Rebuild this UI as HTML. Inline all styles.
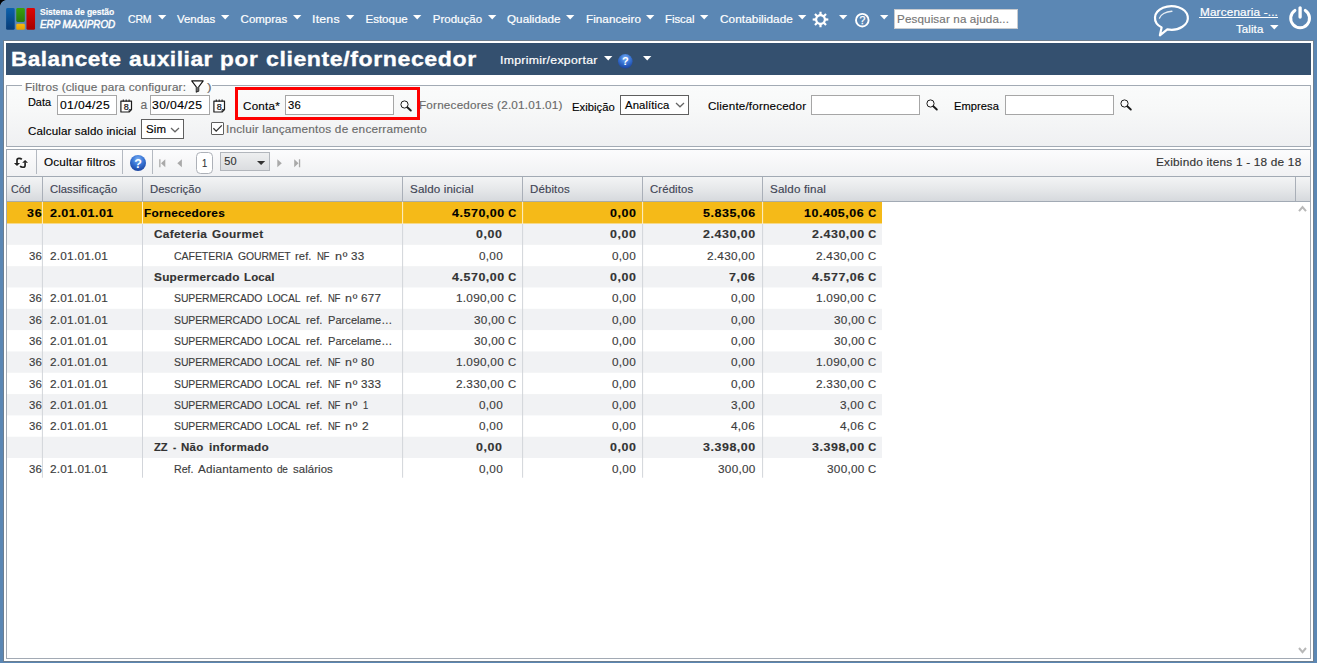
<!DOCTYPE html>
<html lang="pt-BR"><head><meta charset="utf-8"><title>Balancete auxiliar por cliente/fornecedor</title>
<style>
html,body{margin:0;padding:0;background:#5b87b4}
body{width:1317px;height:663px;overflow:hidden;position:relative;font-family:"Liberation Sans",sans-serif}
#bg{position:absolute;left:0;top:0;width:1317px;height:663px;background:#5b87b4}
#cr{position:absolute;left:0;top:0;width:7px;height:7px;background:radial-gradient(circle at 7px 7px,rgba(0,0,0,0) 6.6px,#000 7.4px)}
.t{position:absolute;white-space:nowrap;color:#000;transform-origin:0 0;-webkit-text-stroke-width:.14px}
.a{position:absolute;display:block;overflow:visible}
.b{position:absolute;box-sizing:border-box}
</style></head><body>
<div id="bg"></div><div id="cr"></div>
<nav>
<svg class="a" style="left:5px;top:7px" width="32" height="24" viewBox="0 0 32 24"><defs><linearGradient id="lb" x1="0" y1="0" x2="0" y2="1"><stop offset="0" stop-color="#0b61ad"/><stop offset="1" stop-color="#073b76"/></linearGradient><linearGradient id="lg" x1="0" y1="0" x2="0" y2="1"><stop offset="0" stop-color="#38a00c"/><stop offset="1" stop-color="#2a7a0c"/></linearGradient><linearGradient id="ly" x1="0" y1="0" x2="0" y2="1"><stop offset="0" stop-color="#f7b80c"/><stop offset="1" stop-color="#e69e04"/></linearGradient><linearGradient id="lr" x1="0" y1="0" x2="0" y2="1"><stop offset="0" stop-color="#de0505"/><stop offset="1" stop-color="#a50000"/></linearGradient></defs><rect x="1.1" y="1.1" width="8.6" height="21.7" rx="1.4" fill="url(#lb)"/><rect x="11.25" y="1.1" width="8.6" height="13.8" rx="1.4" fill="url(#lg)"/><rect x="11.25" y="16.7" width="8.6" height="6.1" rx="1.4" fill="url(#ly)"/><rect x="21.45" y="1.1" width="8.6" height="21.7" rx="1.4" fill="url(#lr)"/></svg>
<svg class="a" style="left:812.1px;top:11.4px" width="17" height="17" viewBox="0 0 17 17"><path d="M7.35 3.12 L7.44 0.67 L9.56 0.67 L9.65 3.12 L11.49 3.89 L13.28 2.21 L14.79 3.72 L13.11 5.51 L13.88 7.35 L16.33 7.44 L16.33 9.56 L13.88 9.65 L13.11 11.49 L14.79 13.28 L13.28 14.79 L11.49 13.11 L9.65 13.88 L9.56 16.33 L7.44 16.33 L7.35 13.88 L5.51 13.11 L3.72 14.79 L2.21 13.28 L3.89 11.49 L3.12 9.65 L0.67 9.56 L0.67 7.44 L3.12 7.35 L3.89 5.51 L2.21 3.72 L3.72 2.21 L5.51 3.89Z M8.5 5.2a3.3 3.3 0 1 0 0.001 0Z" fill="#fff" fill-rule="evenodd"/></svg>
<svg class="a" style="left:853.8px;top:11.9px" width="17" height="17" viewBox="0 0 17 17"><circle cx="8.3" cy="8.2" r="6.3" fill="none" stroke="#fff" stroke-width="1.9"/><text x="8.3" y="12" font-family="Liberation Sans, sans-serif" font-size="10.5" text-anchor="middle" fill="#fff" stroke="#fff" stroke-width=".25">?</text></svg>
<div class="b" style="left:894px;top:9px;width:124px;height:20px;background:#fff;border:1px solid #c9ccd0"></div>
<svg class="a" style="left:1150px;top:2px" width="44" height="36" viewBox="0 0 44 36"><path d="M17.3 27.36L9.9 33.3L11.6 25.4A16.45 11.8 0 1 1 17.3 27.36Z" fill="none" stroke="#fff" stroke-width="2.2" stroke-linejoin="round"/><path d="M9.5 16.1C10.5 12.6 15.5 9.6 21.9 9.2" fill="none" stroke="#fff" stroke-width="1.4" stroke-linecap="round" opacity=".85"/></svg>
<div class="b" style="left:1199px;top:17px;width:79px;height:1px;background:#fff"></div>
<svg class="a" style="left:1287px;top:4px" width="26" height="28" viewBox="0 0 26 28"><path d="M18.3 6.4A9.4 9.4 0 1 1 7.9 6.4" fill="none" stroke="#fff" stroke-width="3" stroke-linecap="round"/><path d="M13.1 3.8V13" stroke="#fff" stroke-width="3.3" stroke-linecap="round"/></svg>
<svg class="a" style="left:158.00px;top:14.90px" width="8.4" height="4.5" viewBox="0 0 8.4 4.5"><path d="M0 0H8.4L4.2 4.5Z" fill="#fff"/></svg>
<svg class="a" style="left:221.00px;top:14.90px" width="8.4" height="4.5" viewBox="0 0 8.4 4.5"><path d="M0 0H8.4L4.2 4.5Z" fill="#fff"/></svg>
<svg class="a" style="left:293.00px;top:14.90px" width="8.4" height="4.5" viewBox="0 0 8.4 4.5"><path d="M0 0H8.4L4.2 4.5Z" fill="#fff"/></svg>
<svg class="a" style="left:346.30px;top:14.90px" width="8.4" height="4.5" viewBox="0 0 8.4 4.5"><path d="M0 0H8.4L4.2 4.5Z" fill="#fff"/></svg>
<svg class="a" style="left:413.00px;top:14.90px" width="8.4" height="4.5" viewBox="0 0 8.4 4.5"><path d="M0 0H8.4L4.2 4.5Z" fill="#fff"/></svg>
<svg class="a" style="left:488.00px;top:14.90px" width="8.4" height="4.5" viewBox="0 0 8.4 4.5"><path d="M0 0H8.4L4.2 4.5Z" fill="#fff"/></svg>
<svg class="a" style="left:566.00px;top:14.90px" width="8.4" height="4.5" viewBox="0 0 8.4 4.5"><path d="M0 0H8.4L4.2 4.5Z" fill="#fff"/></svg>
<svg class="a" style="left:645.80px;top:14.90px" width="8.4" height="4.5" viewBox="0 0 8.4 4.5"><path d="M0 0H8.4L4.2 4.5Z" fill="#fff"/></svg>
<svg class="a" style="left:700.00px;top:14.90px" width="8.4" height="4.5" viewBox="0 0 8.4 4.5"><path d="M0 0H8.4L4.2 4.5Z" fill="#fff"/></svg>
<svg class="a" style="left:798.00px;top:14.90px" width="8.4" height="4.5" viewBox="0 0 8.4 4.5"><path d="M0 0H8.4L4.2 4.5Z" fill="#fff"/></svg>
<svg class="a" style="left:838.80px;top:14.90px" width="8.4" height="4.5" viewBox="0 0 8.4 4.5"><path d="M0 0H8.4L4.2 4.5Z" fill="#fff"/></svg>
<svg class="a" style="left:879.80px;top:14.90px" width="8.4" height="4.5" viewBox="0 0 8.4 4.5"><path d="M0 0H8.4L4.2 4.5Z" fill="#fff"/></svg>
<svg class="a" style="left:1269.60px;top:24.90px" width="8.6" height="4.4" viewBox="0 0 8.6 4.4"><path d="M0 0H8.6L4.3 4.4Z" fill="#fff"/></svg>
<span class="t" style="left:39.90px;top:7px;font-size:9px;line-height:10px;letter-spacing:-0.048px;transform:scaleX(0.9483);font-weight:700;color:#fff;">Sistema de gestão</span>
<span class="t" style="left:39.60px;top:19px;font-size:10.4px;line-height:11px;letter-spacing:-0.058px;transform:scaleX(0.9568);font-style:italic;color:#fff;-webkit-text-stroke:.45px #fff;">ERP MAXIPROD</span>
<span class="t" style="left:128.40px;top:13px;font-size:11.5px;line-height:12px;letter-spacing:-0.214px;transform:scaleX(0.9134);color:#fff;-webkit-text-stroke:.2px #fff;">CRM</span>
<span class="t" style="left:176.80px;top:13px;font-size:11.5px;line-height:12px;letter-spacing:-0.007px;transform:scaleX(0.9952);color:#fff;-webkit-text-stroke:.2px #fff;">Vendas</span>
<span class="t" style="left:240.60px;top:13px;font-size:11.5px;line-height:12px;color:#fff;-webkit-text-stroke:.2px #fff;">Compras</span>
<span class="t" style="left:311.93px;top:13px;font-size:11.5px;line-height:12px;letter-spacing:0.214px;transform:scaleX(1.0704);color:#fff;-webkit-text-stroke:.2px #fff;">Itens</span>
<span class="t" style="left:365.50px;top:13px;font-size:11.5px;line-height:12px;color:#fff;-webkit-text-stroke:.2px #fff;">Estoque</span>
<span class="t" style="left:432.80px;top:13px;font-size:11.5px;line-height:12px;letter-spacing:0.008px;color:#fff;-webkit-text-stroke:.2px #fff;">Produção</span>
<span class="t" style="left:507.00px;top:13px;font-size:11.5px;line-height:12px;letter-spacing:0.046px;transform:scaleX(1.0133);color:#fff;-webkit-text-stroke:.2px #fff;">Qualidade</span>
<span class="t" style="left:585.50px;top:13px;font-size:11.5px;line-height:12px;letter-spacing:0.046px;transform:scaleX(1.0147);color:#fff;-webkit-text-stroke:.2px #fff;">Financeiro</span>
<span class="t" style="left:665.40px;top:13px;font-size:11.5px;line-height:12px;letter-spacing:-0.018px;transform:scaleX(0.9834);color:#fff;-webkit-text-stroke:.2px #fff;">Fiscal</span>
<span class="t" style="left:719.70px;top:13px;font-size:11.5px;line-height:12px;letter-spacing:0.073px;transform:scaleX(1.0238);color:#fff;-webkit-text-stroke:.2px #fff;">Contabilidade</span>
<span class="t" style="left:896.60px;top:13px;font-size:11px;line-height:12px;letter-spacing:0.143px;transform:scaleX(1.0542);color:#757575;">Pesquisar na ajuda...</span>
<span class="t" style="left:1199.50px;top:6px;font-size:11px;line-height:12px;letter-spacing:0.163px;transform:scaleX(1.0637);color:#fff;-webkit-text-stroke:.2px #fff;">Marcenaria -...</span>
<span class="t" style="left:1235.80px;top:23px;font-size:11px;line-height:12px;letter-spacing:0.110px;transform:scaleX(1.0401);color:#fff;-webkit-text-stroke:.2px #fff;">Talita</span>
</nav>
<main>
<div class="b" style="left:4px;top:41px;width:1309px;height:620px;background:#fff;box-shadow:0 0 0 1px rgba(120,120,120,.6)"></div>
<header>
<div class="b" style="left:6px;top:43px;width:1305px;height:32px;background:#34506f"></div>
<svg class="a" style="left:616.70px;top:52.70px" width="16.6" height="16.6" viewBox="0 0 16.6 16.6"><defs><radialGradient id="g625" cx="50%" cy="28%" r="75%"><stop offset="0" stop-color="#7fb2f2"/><stop offset="0.45" stop-color="#3b78d8"/><stop offset="1" stop-color="#173f9c"/></radialGradient></defs><circle cx="8.3" cy="8.3" r="7.3" fill="url(#g625)"/><text x="8.3" y="12.26" font-family="Liberation Sans, sans-serif" font-weight="700" font-size="11" text-anchor="middle" fill="#fff">?</text></svg>
<svg class="a" style="left:603.80px;top:55.80px" width="8.4" height="4.4" viewBox="0 0 8.4 4.4"><path d="M0 0H8.4L4.2 4.4Z" fill="#fff"/></svg>
<svg class="a" style="left:642.70px;top:55.80px" width="8.4" height="4.4" viewBox="0 0 8.4 4.4"><path d="M0 0H8.4L4.2 4.4Z" fill="#fff"/></svg>
<span class="t" style="left:10.93px;top:47px;font-size:21px;line-height:23px;letter-spacing:0.439px;transform:scaleX(1.0717);font-weight:700;color:#fff;-webkit-text-stroke:.35px #fff;">Balancete</span>
<span class="t" style="left:129.00px;top:47px;font-size:21px;line-height:23px;letter-spacing:0.456px;transform:scaleX(1.0880);font-weight:700;color:#fff;-webkit-text-stroke:.35px #fff;">auxiliar</span>
<span class="t" style="left:219.83px;top:47px;font-size:21px;line-height:23px;letter-spacing:0.610px;transform:scaleX(1.0745);font-weight:700;color:#fff;-webkit-text-stroke:.35px #fff;">por</span>
<span class="t" style="left:265.50px;top:47px;font-size:21px;line-height:23px;letter-spacing:0.526px;transform:scaleX(1.1005);font-weight:700;color:#fff;-webkit-text-stroke:.35px #fff;">cliente/fornecedor</span>
<span class="t" style="left:500.29px;top:54px;font-size:11px;line-height:12px;letter-spacing:0.278px;transform:scaleX(1.1115);color:#fff;-webkit-text-stroke:.2px #fff;">Imprimir/exportar</span>
</header>
<section id="filtros">
<div class="b" style="left:6px;top:85px;width:1305px;height:62px;border:1px solid #a2aab4;background:linear-gradient(180deg,#fafbfb 0,#f7f8f8 40%,#eff0f2 100%)"></div>
<div class="b" style="left:22px;top:85px;width:190.4px;height:1px;background:#fbfbfb"></div>
<svg class="a" style="left:191.4px;top:79.6px" width="13" height="13" viewBox="0 0 13 13"><path d="M0.7 0.9H12.2L7.7 6.9V11L5.3 12.1V6.9Z" fill="none" stroke="#111" stroke-width="1.1" stroke-linejoin="round"/><path d="M5.5 7H7.5V10.9L5.5 11.8Z" fill="#666"/></svg>
<div class="b" style="left:57px;top:95px;width:59.7px;height:19.5px;background:#fff;border:1px solid #a6a6a6"></div>
<svg class="a" style="left:119.60px;top:98.70px" width="13" height="14" viewBox="0 0 13 14"><path d="M0.9 2.1H11.5V10.6L9.1 13H0.9Z" fill="#fff" stroke="#1c1c1c" stroke-width="1.2" stroke-linejoin="round"/><path d="M11.5 10.6H9.1V13" fill="none" stroke="#222" stroke-width="0.9"/><path d="M3.3 0.5V2.6M6.2 0.5V2.6M9.1 0.5V2.6" stroke="#222" stroke-width="1.1"/><text x="6.2" y="10.7" font-family="Liberation Sans, sans-serif" font-size="9" text-anchor="middle" fill="#111" stroke="#111" stroke-width=".2">8</text></svg>
<div class="b" style="left:150px;top:95px;width:59.7px;height:19.5px;background:#fff;border:1px solid #a6a6a6"></div>
<svg class="a" style="left:212.50px;top:98.70px" width="13" height="14" viewBox="0 0 13 14"><path d="M0.9 2.1H11.5V10.6L9.1 13H0.9Z" fill="#fff" stroke="#1c1c1c" stroke-width="1.2" stroke-linejoin="round"/><path d="M11.5 10.6H9.1V13" fill="none" stroke="#222" stroke-width="0.9"/><path d="M3.3 0.5V2.6M6.2 0.5V2.6M9.1 0.5V2.6" stroke="#222" stroke-width="1.1"/><text x="6.2" y="10.7" font-family="Liberation Sans, sans-serif" font-size="9" text-anchor="middle" fill="#111" stroke="#111" stroke-width=".2">8</text></svg>
<div class="b" style="left:285px;top:95px;width:108.8px;height:19.5px;background:#fff;border:1px solid #a6a6a6"></div>
<svg class="a" style="left:399.50px;top:99.50px" width="13" height="13" viewBox="0 0 13 13"><circle cx="4.5" cy="4.5" r="3.6" fill="#fcfcfc" stroke="#1a1a1a" stroke-width="1"/><path d="M7.3 7.3L10.8 10.5" stroke="#1a1a1a" stroke-width="1.9" stroke-linecap="round"/></svg>
<div class="b" style="left:620.3px;top:95.4px;width:68.8px;height:19.6px;background:#fff;border:1px solid #5f5f5f"></div>
<svg class="a" style="left:674.60px;top:102.40px" width="10" height="5.8" viewBox="-1 -1 10 5.8"><path d="M0 0L4.0 3.8L8 0" fill="none" stroke="#666" stroke-width="1.25"/></svg>
<div class="b" style="left:811px;top:95.4px;width:109.2px;height:19.6px;background:#fff;border:1px solid #a6a6a6"></div>
<svg class="a" style="left:925.60px;top:99.40px" width="13" height="13" viewBox="0 0 13 13"><circle cx="4.5" cy="4.5" r="3.6" fill="#fcfcfc" stroke="#1a1a1a" stroke-width="1"/><path d="M7.3 7.3L10.8 10.5" stroke="#1a1a1a" stroke-width="1.9" stroke-linecap="round"/></svg>
<div class="b" style="left:1005px;top:95.4px;width:109.2px;height:19.6px;background:#fff;border:1px solid #a6a6a6"></div>
<svg class="a" style="left:1119.50px;top:99.40px" width="13" height="13" viewBox="0 0 13 13"><circle cx="4.5" cy="4.5" r="3.6" fill="#fcfcfc" stroke="#1a1a1a" stroke-width="1"/><path d="M7.3 7.3L10.8 10.5" stroke="#1a1a1a" stroke-width="1.9" stroke-linecap="round"/></svg>
<div class="b" style="left:141.2px;top:119.4px;width:42.6px;height:19.6px;background:#fff;border:1px solid #5f5f5f"></div>
<svg class="a" style="left:170.10px;top:126.50px" width="10" height="5.8" viewBox="-1 -1 10 5.8"><path d="M0 0L4.0 3.8L8 0" fill="none" stroke="#666" stroke-width="1.25"/></svg>
<div class="b" style="left:211px;top:122px;width:13px;height:13px;background:#fff;border:1px solid #5f5f5f;border-radius:1px"></div>
<svg class="a" style="left:211px;top:122px" width="13" height="13" viewBox="0 0 13 13"><path d="M2.4 6.3L5.2 9.1L10.8 3.4" fill="none" stroke="#333" stroke-width="1.3"/></svg>
<span class="t" style="left:24.60px;top:81px;font-size:11px;line-height:12px;letter-spacing:0.163px;transform:scaleX(1.0691);color:#6a6a6a;">Filtros (clique para configurar:</span>
<span class="t" style="left:207.20px;top:81px;font-size:11px;line-height:12px;transform:scaleX(1.2333);color:#6a6a6a;">)</span>
<span class="t" style="left:27.60px;top:96px;font-size:11px;line-height:12px;letter-spacing:-0.011px;transform:scaleX(0.9923);">Data</span>
<span class="t" style="left:59.90px;top:99px;font-size:11px;line-height:12px;letter-spacing:0.308px;transform:scaleX(1.1035);">01/04/25</span>
<span class="t" style="left:140.40px;top:98px;font-size:12px;line-height:14px;color:#6a6a6a;">a</span>
<span class="t" style="left:152.40px;top:99px;font-size:11px;line-height:12px;letter-spacing:0.324px;transform:scaleX(1.1096);">30/04/25</span>
<span class="t" style="left:242.60px;top:100px;font-size:11px;line-height:12px;letter-spacing:0.208px;transform:scaleX(1.0595);">Conta*</span>
<span class="t" style="left:287.80px;top:99px;font-size:11px;line-height:12px;letter-spacing:0.131px;transform:scaleX(1.0205);">36</span>
<span class="t" style="left:418.60px;top:99px;font-size:11px;line-height:12px;letter-spacing:0.180px;transform:scaleX(1.0658);color:#6a6a6a;">Fornecedores (2.01.01.01)</span>
<span class="t" style="left:571.80px;top:101px;font-size:11px;line-height:12px;letter-spacing:0.061px;transform:scaleX(1.0194);">Exibição</span>
<span class="t" style="left:625.10px;top:99px;font-size:11px;line-height:12px;letter-spacing:0.086px;transform:scaleX(1.0306);">Analítica</span>
<span class="t" style="left:707.60px;top:100px;font-size:11px;line-height:12px;letter-spacing:0.159px;transform:scaleX(1.0589);">Cliente/fornecedor</span>
<span class="t" style="left:953.70px;top:100px;font-size:11px;line-height:12px;letter-spacing:0.052px;transform:scaleX(1.0131);">Empresa</span>
<span class="t" style="left:27.60px;top:125px;font-size:11px;line-height:12px;letter-spacing:0.123px;transform:scaleX(1.0506);">Calcular saldo inicial</span>
<span class="t" style="left:145.80px;top:123px;font-size:11px;line-height:12px;letter-spacing:0.205px;transform:scaleX(1.0422);">Sim</span>
<span class="t" style="left:226.23px;top:123px;font-size:11px;line-height:12px;letter-spacing:0.190px;transform:scaleX(1.0713);color:#6a6a6a;">Incluir lançamentos de encerramento</span>
<div class="b" style="left:235px;top:87px;width:185px;height:33px;border:3px solid #fe0000"></div>
</section>
<section id="toolbar">
<div class="b" style="left:6px;top:149px;width:1305px;height:28px;border:1px solid #a2aab4;border-bottom:0;background:linear-gradient(180deg,#fcfcfd,#f0f1f3)"></div>
<div class="b" style="left:36px;top:150px;width:1px;height:23.5px;background:#b4b9c1"></div>
<div class="b" style="left:122px;top:150px;width:1px;height:23.5px;background:#b4b9c1"></div>
<div class="b" style="left:152px;top:150px;width:1px;height:23.5px;background:#b4b9c1"></div>
<svg class="a" style="left:13px;top:157px" width="17" height="13" viewBox="0 0 17 13"><g fill="#fff" stroke="#fff" opacity=".9" stroke-linejoin="round"><path d="M8.8 2.3C7.6 1 4 0.7 4 3.2V6.3" fill="none" stroke-width="3.4" stroke-width="1.6"/><path d="M0.9 6.1H7.1L4 9Z" stroke-width="1.6"/><path d="M7.1 9.2C8.3 10.5 12.1 10.9 12.1 8.4V5.6" fill="none" stroke-width="3.4"/><path d="M9.1 5.8H15.1L12.1 2.9Z" stroke-width="1.6"/></g><g fill="#222" stroke="#222"><path d="M8.8 2.3C7.6 1 4 0.7 4 3.2V6.3" fill="none" stroke-width="1.7"/><path d="M0.9 6.1H7.1L4 9Z" stroke="none"/><path d="M7.1 9.2C8.3 10.5 12.1 10.9 12.1 8.4V5.6" fill="none" stroke-width="1.7"/><path d="M9.1 5.8H15.1L12.1 2.9Z" stroke="none"/></g></svg>
<svg class="a" style="left:128.80px;top:154.00px" width="18" height="18" viewBox="0 0 18 18"><defs><radialGradient id="g137" cx="50%" cy="28%" r="75%"><stop offset="0" stop-color="#7fb2f2"/><stop offset="0.45" stop-color="#3b78d8"/><stop offset="1" stop-color="#173f9c"/></radialGradient></defs><circle cx="9" cy="9" r="8" fill="url(#g137)"/><text x="9" y="13.50" font-family="Liberation Sans, sans-serif" font-weight="700" font-size="12.5" text-anchor="middle" fill="#fff">?</text></svg>
<svg class="a" style="left:158.8px;top:158.8px" width="8" height="9" viewBox="0 0 8 9"><path d="M0.2 0.2H1.5V8.2H0.2ZM6.3 0.2V8.2L2 4.2Z" fill="#a9a9a9"/></svg>
<svg class="a" style="left:177.3px;top:158.8px" width="6" height="9" viewBox="0 0 6 9"><path d="M4.9 0.2V8.2L0.3 4.2Z" fill="#a9a9a9"/></svg>
<div class="b" style="left:196.2px;top:152px;width:16.5px;height:21.5px;background:#fff;border:1px solid #adb1b8;border-radius:4.5px"></div>
<div class="b" style="left:220px;top:152px;width:49.6px;height:19px;border:1px solid #b2b6bc;background:linear-gradient(180deg,#eeeff0,#dbdde0)"></div>
<svg class="a" style="left:256.60px;top:161.00px" width="8.2" height="4.1" viewBox="0 0 8.2 4.1"><path d="M0 0H8.2L4.1 4.1Z" fill="#333"/></svg>
<svg class="a" style="left:276.5px;top:158.8px" width="6" height="9" viewBox="0 0 6 9"><path d="M0.3 0.2V8.2L4.8 4.2Z" fill="#a9a9a9"/></svg>
<svg class="a" style="left:293.6px;top:158.8px" width="8" height="9" viewBox="0 0 8 9"><path d="M4.9 0.2H6.2V8.2H4.9ZM0.2 0.2V8.2L4.5 4.2Z" fill="#a9a9a9"/></svg>
<span class="t" style="left:44.00px;top:156px;font-size:11px;line-height:12px;letter-spacing:0.157px;transform:scaleX(1.0668);">Ocultar filtros</span>
<span class="t" style="left:202.20px;top:157px;font-size:11px;line-height:12px;transform:scaleX(0.8500);color:#333;">1</span>
<span class="t" style="left:224.30px;top:155px;font-size:11px;line-height:12px;color:#333;">50</span>
<span class="t" style="left:1156.40px;top:156px;font-size:11px;line-height:12px;letter-spacing:0.187px;transform:scaleX(1.0747);color:#333;">Exibindo itens 1 - 18 de 18</span>
</section>
<section id="grid">
<div class="b" style="left:6px;top:176px;width:1305px;height:26px;border:1px solid #a2aab4;background:linear-gradient(180deg,#f3f4f5 0,#e6e8ea 50%,#d6d9dd 100%)"></div>
<div class="b" style="left:42px;top:177px;width:1px;height:24px;background:#a9afb8"></div>
<div class="b" style="left:142px;top:177px;width:1px;height:24px;background:#a9afb8"></div>
<div class="b" style="left:402px;top:177px;width:1px;height:24px;background:#a9afb8"></div>
<div class="b" style="left:522px;top:177px;width:1px;height:24px;background:#a9afb8"></div>
<div class="b" style="left:642px;top:177px;width:1px;height:24px;background:#a9afb8"></div>
<div class="b" style="left:762px;top:177px;width:1px;height:24px;background:#a9afb8"></div>
<div class="b" style="left:1295px;top:177px;width:1px;height:24px;background:#a9afb8"></div>
<span class="t" style="left:10.60px;top:183px;font-size:11px;line-height:12px;letter-spacing:-0.059px;transform:scaleX(0.9677);color:#3e4454;">Cód</span>
<span class="t" style="left:50.10px;top:183px;font-size:11px;line-height:12px;letter-spacing:0.069px;transform:scaleX(1.0243);color:#3e4454;">Classificação</span>
<span class="t" style="left:149.90px;top:183px;font-size:11px;line-height:12px;letter-spacing:0.086px;transform:scaleX(1.0268);color:#3e4454;">Descrição</span>
<span class="t" style="left:409.70px;top:183px;font-size:11px;line-height:12px;letter-spacing:0.137px;transform:scaleX(1.0552);color:#3e4454;">Saldo inicial</span>
<span class="t" style="left:529.80px;top:183px;font-size:11px;line-height:12px;letter-spacing:0.135px;transform:scaleX(1.0413);color:#3e4454;">Débitos</span>
<span class="t" style="left:649.90px;top:183px;font-size:11px;line-height:12px;letter-spacing:0.104px;transform:scaleX(1.0336);color:#3e4454;">Créditos</span>
<span class="t" style="left:769.80px;top:183px;font-size:11px;line-height:12px;letter-spacing:0.148px;transform:scaleX(1.0571);color:#3e4454;">Saldo final</span>
<div class="b" style="left:6px;top:202px;width:1305px;height:457px;border:1px solid #a2aab4;border-top:0;background:#fff"></div>
<svg class="a" style="left:7px;top:201px" width="876" height="278" viewBox="0 0 876 278"><rect x="0" y="0.90" width="875" height="21.80" fill="#f5ba18"/><rect x="0" y="22.70" width="875" height="21.14" fill="#f1f2f4"/><rect x="0" y="65.16" width="875" height="21.32" fill="#f1f2f4"/><rect x="0" y="107.80" width="875" height="21.32" fill="#f1f2f4"/><rect x="0" y="150.44" width="875" height="21.32" fill="#f1f2f4"/><rect x="0" y="193.08" width="875" height="21.32" fill="#f1f2f4"/><rect x="0" y="235.72" width="875" height="21.32" fill="#f1f2f4"/><rect x="34.90" y="22.70" width="1" height="254.00" fill="#d2d5da"/><rect x="34.90" y="0.90" width="1" height="21.80" fill="#fff" fill-opacity=".78"/><rect x="135.00" y="22.70" width="1" height="254.00" fill="#d2d5da"/><rect x="135.00" y="0.90" width="1" height="21.80" fill="#fff" fill-opacity=".78"/><rect x="395.10" y="22.70" width="1" height="254.00" fill="#d2d5da"/><rect x="395.10" y="0.90" width="1" height="21.80" fill="#fff" fill-opacity=".78"/><rect x="515.10" y="22.70" width="1" height="254.00" fill="#d2d5da"/><rect x="515.10" y="0.90" width="1" height="21.80" fill="#fff" fill-opacity=".78"/><rect x="635.10" y="22.70" width="1" height="254.00" fill="#d2d5da"/><rect x="635.10" y="0.90" width="1" height="21.80" fill="#fff" fill-opacity=".78"/><rect x="755.10" y="22.70" width="1" height="254.00" fill="#d2d5da"/><rect x="755.10" y="0.90" width="1" height="21.80" fill="#fff" fill-opacity=".78"/></svg>
<svg class="a" style="left:1298.00px;top:206.00px" width="9" height="6.2" viewBox="-1 -1 9 6.2"><path d="M0 4.2L3.5 0L7 4.2" fill="none" stroke="#b8b8b8" stroke-width="2"/></svg>
<svg class="a" style="left:1298.00px;top:647.40px" width="9" height="6.2" viewBox="-1 -1 9 6.2"><path d="M0 0L3.5 4.2L7 0" fill="none" stroke="#b8b8b8" stroke-width="2"/></svg>
<div>
<span class="t" style="left:27.30px;top:207px;font-size:11px;line-height:12px;letter-spacing:0.739px;transform:scaleX(1.1278);font-weight:700;">36</span>
<span class="t" style="left:50.10px;top:207px;font-size:11px;line-height:12px;letter-spacing:0.386px;transform:scaleX(1.1419);font-weight:700;">2.01.01.01</span>
<span class="t" style="left:143.60px;top:207px;font-size:11px;line-height:12px;letter-spacing:0.237px;transform:scaleX(1.0713);font-weight:700;">Fornecedores</span>
<span class="t" style="left:508.20px;top:207px;font-size:11px;line-height:12px;font-weight:700;">C</span>
<span class="t" style="left:451.90px;top:207px;font-size:11px;line-height:12px;letter-spacing:0.487px;transform:scaleX(1.1300);font-weight:700;">4.570,00</span>
<span class="t" style="left:609.69px;top:207px;font-size:11px;line-height:12px;letter-spacing:0.487px;transform:scaleX(1.1300);font-weight:700;">0,00</span>
<span class="t" style="left:702.90px;top:207px;font-size:11px;line-height:12px;letter-spacing:0.487px;transform:scaleX(1.1300);font-weight:700;">5.835,06</span>
<span class="t" style="left:868.20px;top:207px;font-size:11px;line-height:12px;font-weight:700;">C</span>
<span class="t" style="left:804.44px;top:207px;font-size:11px;line-height:12px;letter-spacing:0.487px;transform:scaleX(1.1300);font-weight:700;">10.405,06</span>
</div>
<div>
<span class="t" style="left:153.50px;top:228px;font-size:11px;line-height:12px;letter-spacing:0.237px;transform:scaleX(1.0791);font-weight:700;color:#333;">Cafeteria</span>
<span class="t" style="left:211.50px;top:228px;font-size:11px;line-height:12px;letter-spacing:0.289px;transform:scaleX(1.0750);font-weight:700;color:#333;">Gourmet</span>
<span class="t" style="left:476.39px;top:228px;font-size:11px;line-height:12px;letter-spacing:0.487px;transform:scaleX(1.1300);font-weight:700;color:#333;">0,00</span>
<span class="t" style="left:609.69px;top:228px;font-size:11px;line-height:12px;letter-spacing:0.487px;transform:scaleX(1.1300);font-weight:700;color:#333;">0,00</span>
<span class="t" style="left:702.90px;top:228px;font-size:11px;line-height:12px;letter-spacing:0.487px;transform:scaleX(1.1300);font-weight:700;color:#333;">2.430,00</span>
<span class="t" style="left:868.20px;top:228px;font-size:11px;line-height:12px;font-weight:700;color:#333;">C</span>
<span class="t" style="left:811.90px;top:228px;font-size:11px;line-height:12px;letter-spacing:0.487px;transform:scaleX(1.1300);font-weight:700;color:#333;">2.430,00</span>
</div>
<div>
<span class="t" style="left:29.00px;top:250px;font-size:11px;line-height:12px;letter-spacing:0.230px;transform:scaleX(1.0366);color:#3c3c3c;">36</span>
<span class="t" style="left:50.10px;top:250px;font-size:11px;line-height:12px;letter-spacing:0.215px;transform:scaleX(1.0742);color:#3c3c3c;">2.01.01.01</span>
<span class="t" style="left:173.70px;top:250px;font-size:11px;line-height:12px;letter-spacing:-0.061px;transform:scaleX(0.9579);color:#3c3c3c;">CAFETERIA</span>
<span class="t" style="left:237.50px;top:250px;font-size:11px;line-height:12px;letter-spacing:-0.095px;transform:scaleX(0.9458);color:#3c3c3c;">GOURMET</span>
<span class="t" style="left:295.30px;top:250px;font-size:11px;line-height:12px;letter-spacing:0.064px;transform:scaleX(1.0231);color:#3c3c3c;">ref.</span>
<span class="t" style="left:317.20px;top:250px;font-size:11px;line-height:12px;letter-spacing:-0.386px;transform:scaleX(0.8724);color:#3c3c3c;">NF</span>
<span class="t" style="left:334.80px;top:250px;font-size:11px;line-height:12px;letter-spacing:0.697px;transform:scaleX(1.1466);color:#3c3c3c;">nº</span>
<span class="t" style="left:350.90px;top:250px;font-size:11px;line-height:12px;letter-spacing:0.327px;transform:scaleX(1.0527);color:#3c3c3c;">33</span>
<span class="t" style="left:478.50px;top:250px;font-size:11px;line-height:12px;letter-spacing:0.255px;transform:scaleX(1.0700);color:#3c3c3c;">0,00</span>
<span class="t" style="left:611.80px;top:250px;font-size:11px;line-height:12px;letter-spacing:0.255px;transform:scaleX(1.0700);color:#3c3c3c;">0,00</span>
<span class="t" style="left:707.40px;top:250px;font-size:11px;line-height:12px;letter-spacing:0.255px;transform:scaleX(1.0700);color:#3c3c3c;">2.430,00</span>
<span class="t" style="left:867.96px;top:250px;font-size:11px;line-height:12px;transform:scaleX(1.0300);color:#3c3c3c;">C</span>
<span class="t" style="left:816.40px;top:250px;font-size:11px;line-height:12px;letter-spacing:0.255px;transform:scaleX(1.0700);color:#3c3c3c;">2.430,00</span>
</div>
<div>
<span class="t" style="left:153.50px;top:271px;font-size:11px;line-height:12px;letter-spacing:0.252px;transform:scaleX(1.0714);font-weight:700;color:#333;">Supermercado</span>
<span class="t" style="left:243.90px;top:271px;font-size:11px;line-height:12px;letter-spacing:0.145px;transform:scaleX(1.0391);font-weight:700;color:#333;">Local</span>
<span class="t" style="left:508.20px;top:271px;font-size:11px;line-height:12px;font-weight:700;color:#333;">C</span>
<span class="t" style="left:451.90px;top:271px;font-size:11px;line-height:12px;letter-spacing:0.487px;transform:scaleX(1.1300);font-weight:700;color:#333;">4.570,00</span>
<span class="t" style="left:609.69px;top:271px;font-size:11px;line-height:12px;letter-spacing:0.487px;transform:scaleX(1.1300);font-weight:700;color:#333;">0,00</span>
<span class="t" style="left:729.29px;top:271px;font-size:11px;line-height:12px;letter-spacing:0.487px;transform:scaleX(1.1300);font-weight:700;color:#333;">7,06</span>
<span class="t" style="left:868.20px;top:271px;font-size:11px;line-height:12px;font-weight:700;color:#333;">C</span>
<span class="t" style="left:811.90px;top:271px;font-size:11px;line-height:12px;letter-spacing:0.487px;transform:scaleX(1.1300);font-weight:700;color:#333;">4.577,06</span>
</div>
<div>
<span class="t" style="left:29.00px;top:292px;font-size:11px;line-height:12px;letter-spacing:0.230px;transform:scaleX(1.0366);color:#3c3c3c;">36</span>
<span class="t" style="left:50.10px;top:292px;font-size:11px;line-height:12px;letter-spacing:0.215px;transform:scaleX(1.0742);color:#3c3c3c;">2.01.01.01</span>
<span class="t" style="left:173.70px;top:292px;font-size:11px;line-height:12px;letter-spacing:-0.083px;transform:scaleX(0.9482);color:#3c3c3c;">SUPERMERCADO</span>
<span class="t" style="left:267.40px;top:292px;font-size:11px;line-height:12px;letter-spacing:-0.102px;transform:scaleX(0.9396);color:#3c3c3c;">LOCAL</span>
<span class="t" style="left:305.70px;top:292px;font-size:11px;line-height:12px;letter-spacing:0.064px;transform:scaleX(1.0231);color:#3c3c3c;">ref.</span>
<span class="t" style="left:327.70px;top:292px;font-size:11px;line-height:12px;letter-spacing:-0.406px;transform:scaleX(0.8667);color:#3c3c3c;">NF</span>
<span class="t" style="left:345.40px;top:292px;font-size:11px;line-height:12px;letter-spacing:0.643px;transform:scaleX(1.1338);color:#3c3c3c;">nº</span>
<span class="t" style="left:361.40px;top:292px;font-size:11px;line-height:12px;letter-spacing:0.275px;transform:scaleX(1.0593);color:#3c3c3c;">677</span>
<span class="t" style="left:507.96px;top:292px;font-size:11px;line-height:12px;transform:scaleX(1.0300);color:#3c3c3c;">C</span>
<span class="t" style="left:456.40px;top:292px;font-size:11px;line-height:12px;letter-spacing:0.255px;transform:scaleX(1.0700);color:#3c3c3c;">1.090,00</span>
<span class="t" style="left:611.80px;top:292px;font-size:11px;line-height:12px;letter-spacing:0.255px;transform:scaleX(1.0700);color:#3c3c3c;">0,00</span>
<span class="t" style="left:731.40px;top:292px;font-size:11px;line-height:12px;letter-spacing:0.255px;transform:scaleX(1.0700);color:#3c3c3c;">0,00</span>
<span class="t" style="left:867.96px;top:292px;font-size:11px;line-height:12px;transform:scaleX(1.0300);color:#3c3c3c;">C</span>
<span class="t" style="left:816.40px;top:292px;font-size:11px;line-height:12px;letter-spacing:0.255px;transform:scaleX(1.0700);color:#3c3c3c;">1.090,00</span>
</div>
<div>
<span class="t" style="left:29.00px;top:314px;font-size:11px;line-height:12px;letter-spacing:0.230px;transform:scaleX(1.0366);color:#3c3c3c;">36</span>
<span class="t" style="left:50.10px;top:314px;font-size:11px;line-height:12px;letter-spacing:0.215px;transform:scaleX(1.0742);color:#3c3c3c;">2.01.01.01</span>
<span class="t" style="left:173.70px;top:314px;font-size:11px;line-height:12px;letter-spacing:-0.083px;transform:scaleX(0.9482);color:#3c3c3c;">SUPERMERCADO</span>
<span class="t" style="left:267.40px;top:314px;font-size:11px;line-height:12px;letter-spacing:-0.102px;transform:scaleX(0.9396);color:#3c3c3c;">LOCAL</span>
<span class="t" style="left:305.70px;top:314px;font-size:11px;line-height:12px;letter-spacing:0.064px;transform:scaleX(1.0231);color:#3c3c3c;">ref.</span>
<span class="t" style="left:327.70px;top:314px;font-size:11px;line-height:12px;letter-spacing:0.028px;transform:scaleX(1.0075);color:#3c3c3c;">Parcelame…</span>
<span class="t" style="left:507.96px;top:314px;font-size:11px;line-height:12px;transform:scaleX(1.0300);color:#3c3c3c;">C</span>
<span class="t" style="left:473.58px;top:314px;font-size:11px;line-height:12px;letter-spacing:0.255px;transform:scaleX(1.0700);color:#3c3c3c;">30,00</span>
<span class="t" style="left:611.80px;top:314px;font-size:11px;line-height:12px;letter-spacing:0.255px;transform:scaleX(1.0700);color:#3c3c3c;">0,00</span>
<span class="t" style="left:731.40px;top:314px;font-size:11px;line-height:12px;letter-spacing:0.255px;transform:scaleX(1.0700);color:#3c3c3c;">0,00</span>
<span class="t" style="left:867.96px;top:314px;font-size:11px;line-height:12px;transform:scaleX(1.0300);color:#3c3c3c;">C</span>
<span class="t" style="left:833.58px;top:314px;font-size:11px;line-height:12px;letter-spacing:0.255px;transform:scaleX(1.0700);color:#3c3c3c;">30,00</span>
</div>
<div>
<span class="t" style="left:29.00px;top:335px;font-size:11px;line-height:12px;letter-spacing:0.230px;transform:scaleX(1.0366);color:#3c3c3c;">36</span>
<span class="t" style="left:50.10px;top:335px;font-size:11px;line-height:12px;letter-spacing:0.215px;transform:scaleX(1.0742);color:#3c3c3c;">2.01.01.01</span>
<span class="t" style="left:173.70px;top:335px;font-size:11px;line-height:12px;letter-spacing:-0.083px;transform:scaleX(0.9482);color:#3c3c3c;">SUPERMERCADO</span>
<span class="t" style="left:267.40px;top:335px;font-size:11px;line-height:12px;letter-spacing:-0.102px;transform:scaleX(0.9396);color:#3c3c3c;">LOCAL</span>
<span class="t" style="left:305.70px;top:335px;font-size:11px;line-height:12px;letter-spacing:0.064px;transform:scaleX(1.0231);color:#3c3c3c;">ref.</span>
<span class="t" style="left:327.70px;top:335px;font-size:11px;line-height:12px;letter-spacing:0.028px;transform:scaleX(1.0075);color:#3c3c3c;">Parcelame…</span>
<span class="t" style="left:507.96px;top:335px;font-size:11px;line-height:12px;transform:scaleX(1.0300);color:#3c3c3c;">C</span>
<span class="t" style="left:473.58px;top:335px;font-size:11px;line-height:12px;letter-spacing:0.255px;transform:scaleX(1.0700);color:#3c3c3c;">30,00</span>
<span class="t" style="left:611.80px;top:335px;font-size:11px;line-height:12px;letter-spacing:0.255px;transform:scaleX(1.0700);color:#3c3c3c;">0,00</span>
<span class="t" style="left:731.40px;top:335px;font-size:11px;line-height:12px;letter-spacing:0.255px;transform:scaleX(1.0700);color:#3c3c3c;">0,00</span>
<span class="t" style="left:867.96px;top:335px;font-size:11px;line-height:12px;transform:scaleX(1.0300);color:#3c3c3c;">C</span>
<span class="t" style="left:833.58px;top:335px;font-size:11px;line-height:12px;letter-spacing:0.255px;transform:scaleX(1.0700);color:#3c3c3c;">30,00</span>
</div>
<div>
<span class="t" style="left:29.00px;top:356px;font-size:11px;line-height:12px;letter-spacing:0.230px;transform:scaleX(1.0366);color:#3c3c3c;">36</span>
<span class="t" style="left:50.10px;top:356px;font-size:11px;line-height:12px;letter-spacing:0.215px;transform:scaleX(1.0742);color:#3c3c3c;">2.01.01.01</span>
<span class="t" style="left:173.70px;top:356px;font-size:11px;line-height:12px;letter-spacing:-0.083px;transform:scaleX(0.9482);color:#3c3c3c;">SUPERMERCADO</span>
<span class="t" style="left:267.40px;top:356px;font-size:11px;line-height:12px;letter-spacing:-0.102px;transform:scaleX(0.9396);color:#3c3c3c;">LOCAL</span>
<span class="t" style="left:305.70px;top:356px;font-size:11px;line-height:12px;letter-spacing:0.064px;transform:scaleX(1.0231);color:#3c3c3c;">ref.</span>
<span class="t" style="left:327.70px;top:356px;font-size:11px;line-height:12px;letter-spacing:-0.406px;transform:scaleX(0.8667);color:#3c3c3c;">NF</span>
<span class="t" style="left:345.40px;top:356px;font-size:11px;line-height:12px;letter-spacing:0.643px;transform:scaleX(1.1338);color:#3c3c3c;">nº</span>
<span class="t" style="left:361.40px;top:356px;font-size:11px;line-height:12px;letter-spacing:0.295px;transform:scaleX(1.0473);color:#3c3c3c;">80</span>
<span class="t" style="left:507.96px;top:356px;font-size:11px;line-height:12px;transform:scaleX(1.0300);color:#3c3c3c;">C</span>
<span class="t" style="left:456.40px;top:356px;font-size:11px;line-height:12px;letter-spacing:0.255px;transform:scaleX(1.0700);color:#3c3c3c;">1.090,00</span>
<span class="t" style="left:611.80px;top:356px;font-size:11px;line-height:12px;letter-spacing:0.255px;transform:scaleX(1.0700);color:#3c3c3c;">0,00</span>
<span class="t" style="left:731.40px;top:356px;font-size:11px;line-height:12px;letter-spacing:0.255px;transform:scaleX(1.0700);color:#3c3c3c;">0,00</span>
<span class="t" style="left:867.96px;top:356px;font-size:11px;line-height:12px;transform:scaleX(1.0300);color:#3c3c3c;">C</span>
<span class="t" style="left:816.40px;top:356px;font-size:11px;line-height:12px;letter-spacing:0.255px;transform:scaleX(1.0700);color:#3c3c3c;">1.090,00</span>
</div>
<div>
<span class="t" style="left:29.00px;top:378px;font-size:11px;line-height:12px;letter-spacing:0.230px;transform:scaleX(1.0366);color:#3c3c3c;">36</span>
<span class="t" style="left:50.10px;top:378px;font-size:11px;line-height:12px;letter-spacing:0.215px;transform:scaleX(1.0742);color:#3c3c3c;">2.01.01.01</span>
<span class="t" style="left:173.70px;top:378px;font-size:11px;line-height:12px;letter-spacing:-0.083px;transform:scaleX(0.9482);color:#3c3c3c;">SUPERMERCADO</span>
<span class="t" style="left:267.40px;top:378px;font-size:11px;line-height:12px;letter-spacing:-0.102px;transform:scaleX(0.9396);color:#3c3c3c;">LOCAL</span>
<span class="t" style="left:305.70px;top:378px;font-size:11px;line-height:12px;letter-spacing:0.064px;transform:scaleX(1.0231);color:#3c3c3c;">ref.</span>
<span class="t" style="left:327.70px;top:378px;font-size:11px;line-height:12px;letter-spacing:-0.406px;transform:scaleX(0.8667);color:#3c3c3c;">NF</span>
<span class="t" style="left:345.40px;top:378px;font-size:11px;line-height:12px;letter-spacing:0.643px;transform:scaleX(1.1338);color:#3c3c3c;">nº</span>
<span class="t" style="left:361.40px;top:378px;font-size:11px;line-height:12px;letter-spacing:0.259px;transform:scaleX(1.0558);color:#3c3c3c;">333</span>
<span class="t" style="left:507.96px;top:378px;font-size:11px;line-height:12px;transform:scaleX(1.0300);color:#3c3c3c;">C</span>
<span class="t" style="left:456.40px;top:378px;font-size:11px;line-height:12px;letter-spacing:0.255px;transform:scaleX(1.0700);color:#3c3c3c;">2.330,00</span>
<span class="t" style="left:611.80px;top:378px;font-size:11px;line-height:12px;letter-spacing:0.255px;transform:scaleX(1.0700);color:#3c3c3c;">0,00</span>
<span class="t" style="left:731.40px;top:378px;font-size:11px;line-height:12px;letter-spacing:0.255px;transform:scaleX(1.0700);color:#3c3c3c;">0,00</span>
<span class="t" style="left:867.96px;top:378px;font-size:11px;line-height:12px;transform:scaleX(1.0300);color:#3c3c3c;">C</span>
<span class="t" style="left:816.40px;top:378px;font-size:11px;line-height:12px;letter-spacing:0.255px;transform:scaleX(1.0700);color:#3c3c3c;">2.330,00</span>
</div>
<div>
<span class="t" style="left:29.00px;top:399px;font-size:11px;line-height:12px;letter-spacing:0.230px;transform:scaleX(1.0366);color:#3c3c3c;">36</span>
<span class="t" style="left:50.10px;top:399px;font-size:11px;line-height:12px;letter-spacing:0.215px;transform:scaleX(1.0742);color:#3c3c3c;">2.01.01.01</span>
<span class="t" style="left:173.70px;top:399px;font-size:11px;line-height:12px;letter-spacing:-0.083px;transform:scaleX(0.9482);color:#3c3c3c;">SUPERMERCADO</span>
<span class="t" style="left:267.40px;top:399px;font-size:11px;line-height:12px;letter-spacing:-0.102px;transform:scaleX(0.9396);color:#3c3c3c;">LOCAL</span>
<span class="t" style="left:305.70px;top:399px;font-size:11px;line-height:12px;letter-spacing:0.064px;transform:scaleX(1.0231);color:#3c3c3c;">ref.</span>
<span class="t" style="left:327.70px;top:399px;font-size:11px;line-height:12px;letter-spacing:-0.406px;transform:scaleX(0.8667);color:#3c3c3c;">NF</span>
<span class="t" style="left:345.40px;top:399px;font-size:11px;line-height:12px;letter-spacing:0.643px;transform:scaleX(1.1338);color:#3c3c3c;">nº</span>
<span class="t" style="left:362.60px;top:399px;font-size:11px;line-height:12px;transform:scaleX(0.8500);color:#3c3c3c;">1</span>
<span class="t" style="left:478.50px;top:399px;font-size:11px;line-height:12px;letter-spacing:0.255px;transform:scaleX(1.0700);color:#3c3c3c;">0,00</span>
<span class="t" style="left:611.80px;top:399px;font-size:11px;line-height:12px;letter-spacing:0.255px;transform:scaleX(1.0700);color:#3c3c3c;">0,00</span>
<span class="t" style="left:731.40px;top:399px;font-size:11px;line-height:12px;letter-spacing:0.255px;transform:scaleX(1.0700);color:#3c3c3c;">3,00</span>
<span class="t" style="left:867.96px;top:399px;font-size:11px;line-height:12px;transform:scaleX(1.0300);color:#3c3c3c;">C</span>
<span class="t" style="left:840.40px;top:399px;font-size:11px;line-height:12px;letter-spacing:0.255px;transform:scaleX(1.0700);color:#3c3c3c;">3,00</span>
</div>
<div>
<span class="t" style="left:29.00px;top:420px;font-size:11px;line-height:12px;letter-spacing:0.230px;transform:scaleX(1.0366);color:#3c3c3c;">36</span>
<span class="t" style="left:50.10px;top:420px;font-size:11px;line-height:12px;letter-spacing:0.215px;transform:scaleX(1.0742);color:#3c3c3c;">2.01.01.01</span>
<span class="t" style="left:173.70px;top:420px;font-size:11px;line-height:12px;letter-spacing:-0.083px;transform:scaleX(0.9482);color:#3c3c3c;">SUPERMERCADO</span>
<span class="t" style="left:267.40px;top:420px;font-size:11px;line-height:12px;letter-spacing:-0.102px;transform:scaleX(0.9396);color:#3c3c3c;">LOCAL</span>
<span class="t" style="left:305.70px;top:420px;font-size:11px;line-height:12px;letter-spacing:0.064px;transform:scaleX(1.0231);color:#3c3c3c;">ref.</span>
<span class="t" style="left:327.70px;top:420px;font-size:11px;line-height:12px;letter-spacing:-0.406px;transform:scaleX(0.8667);color:#3c3c3c;">NF</span>
<span class="t" style="left:345.40px;top:420px;font-size:11px;line-height:12px;letter-spacing:0.643px;transform:scaleX(1.1338);color:#3c3c3c;">nº</span>
<span class="t" style="left:361.60px;top:420px;font-size:11px;line-height:12px;transform:scaleX(1.0833);color:#3c3c3c;">2</span>
<span class="t" style="left:478.50px;top:420px;font-size:11px;line-height:12px;letter-spacing:0.255px;transform:scaleX(1.0700);color:#3c3c3c;">0,00</span>
<span class="t" style="left:611.80px;top:420px;font-size:11px;line-height:12px;letter-spacing:0.255px;transform:scaleX(1.0700);color:#3c3c3c;">0,00</span>
<span class="t" style="left:731.40px;top:420px;font-size:11px;line-height:12px;letter-spacing:0.255px;transform:scaleX(1.0700);color:#3c3c3c;">4,06</span>
<span class="t" style="left:867.96px;top:420px;font-size:11px;line-height:12px;transform:scaleX(1.0300);color:#3c3c3c;">C</span>
<span class="t" style="left:840.40px;top:420px;font-size:11px;line-height:12px;letter-spacing:0.255px;transform:scaleX(1.0700);color:#3c3c3c;">4,06</span>
</div>
<div>
<span class="t" style="left:153.50px;top:441px;font-size:11px;line-height:12px;letter-spacing:0.063px;transform:scaleX(1.0086);font-weight:700;color:#333;">ZZ</span>
<span class="t" style="left:172.50px;top:441px;font-size:11px;line-height:12px;transform:scaleX(0.8750);font-weight:700;color:#333;">-</span>
<span class="t" style="left:181.10px;top:441px;font-size:11px;line-height:12px;letter-spacing:0.257px;transform:scaleX(1.0475);font-weight:700;color:#333;">Não</span>
<span class="t" style="left:208.80px;top:441px;font-size:11px;line-height:12px;letter-spacing:0.239px;transform:scaleX(1.0703);font-weight:700;color:#333;">informado</span>
<span class="t" style="left:476.39px;top:441px;font-size:11px;line-height:12px;letter-spacing:0.487px;transform:scaleX(1.1300);font-weight:700;color:#333;">0,00</span>
<span class="t" style="left:609.69px;top:441px;font-size:11px;line-height:12px;letter-spacing:0.487px;transform:scaleX(1.1300);font-weight:700;color:#333;">0,00</span>
<span class="t" style="left:702.90px;top:441px;font-size:11px;line-height:12px;letter-spacing:0.487px;transform:scaleX(1.1300);font-weight:700;color:#333;">3.398,00</span>
<span class="t" style="left:868.20px;top:441px;font-size:11px;line-height:12px;font-weight:700;color:#333;">C</span>
<span class="t" style="left:811.90px;top:441px;font-size:11px;line-height:12px;letter-spacing:0.487px;transform:scaleX(1.1300);font-weight:700;color:#333;">3.398,00</span>
</div>
<div>
<span class="t" style="left:29.00px;top:463px;font-size:11px;line-height:12px;letter-spacing:0.230px;transform:scaleX(1.0366);color:#3c3c3c;">36</span>
<span class="t" style="left:50.10px;top:463px;font-size:11px;line-height:12px;letter-spacing:0.215px;transform:scaleX(1.0742);color:#3c3c3c;">2.01.01.01</span>
<span class="t" style="left:173.60px;top:463px;font-size:11px;line-height:12px;letter-spacing:-0.037px;transform:scaleX(0.9697);color:#3c3c3c;">Ref.</span>
<span class="t" style="left:197.50px;top:463px;font-size:11px;line-height:12px;letter-spacing:0.201px;transform:scaleX(1.0646);color:#3c3c3c;">Adiantamento</span>
<span class="t" style="left:276.90px;top:463px;font-size:11px;line-height:12px;letter-spacing:-0.218px;transform:scaleX(0.9076);color:#3c3c3c;">de</span>
<span class="t" style="left:292.90px;top:463px;font-size:11px;line-height:12px;letter-spacing:0.092px;transform:scaleX(1.0321);color:#3c3c3c;">salários</span>
<span class="t" style="left:478.50px;top:463px;font-size:11px;line-height:12px;letter-spacing:0.255px;transform:scaleX(1.0700);color:#3c3c3c;">0,00</span>
<span class="t" style="left:611.80px;top:463px;font-size:11px;line-height:12px;letter-spacing:0.255px;transform:scaleX(1.0700);color:#3c3c3c;">0,00</span>
<span class="t" style="left:717.76px;top:463px;font-size:11px;line-height:12px;letter-spacing:0.255px;transform:scaleX(1.0700);color:#3c3c3c;">300,00</span>
<span class="t" style="left:867.96px;top:463px;font-size:11px;line-height:12px;transform:scaleX(1.0300);color:#3c3c3c;">C</span>
<span class="t" style="left:826.76px;top:463px;font-size:11px;line-height:12px;letter-spacing:0.255px;transform:scaleX(1.0700);color:#3c3c3c;">300,00</span>
</div>
</section>
</main>
</body></html>
